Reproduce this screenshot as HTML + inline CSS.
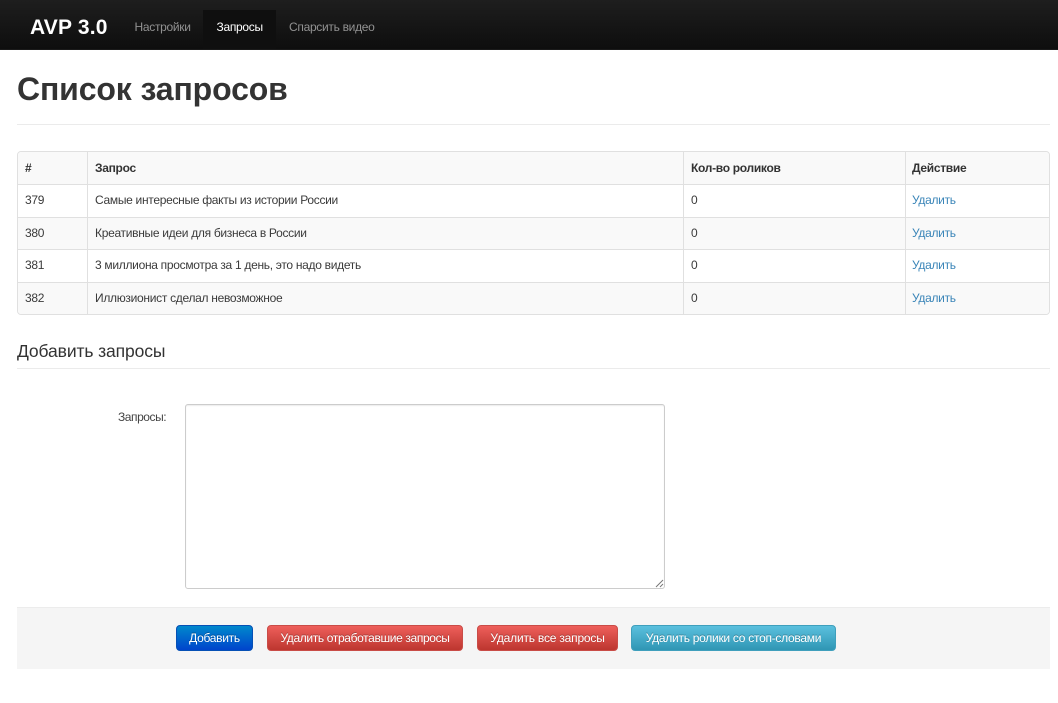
<!DOCTYPE html>
<html lang="ru">
<head>
<meta charset="utf-8">
<title>AVP 3.0</title>
<style>
html,body{margin:0;padding:0;background:#fff;}
body{width:1058px;height:703px;position:relative;overflow:hidden;font-family:"Liberation Sans",Arial,sans-serif;font-size:12px;color:#333;letter-spacing:-.3px;}
.a{position:absolute;white-space:nowrap;}
#nav{left:0;top:0;width:1058px;height:49px;background:linear-gradient(to bottom,#1e1e1e,#0e0e0e);border-bottom:1px solid #1a1a1a;}
#active{left:203px;top:10px;width:73px;height:39px;background:#0f0f0f;}
.nl{top:20px;line-height:14px;font-size:12px;color:#929292;}
hr{position:absolute;margin:0;border:0;height:1px;background:#ebebeb;}
#t{position:absolute;left:17px;top:151px;width:1033px;height:164px;box-sizing:border-box;border:1px solid #e0e0e0;border-radius:4px;overflow:hidden;}
.row{position:absolute;left:0;width:1031px;box-sizing:border-box;border-top:1px solid #e0e0e0;}
.odd{background:#f9f9f9;}
.v{position:absolute;top:0;bottom:0;width:1px;background:#e0e0e0;}
.c{position:absolute;white-space:nowrap;line-height:14px;color:#3a3a3a;}
.b{font-weight:bold;color:#333;}
.l{color:#3a85b8;}
#ta{left:185px;top:404px;width:480px;height:185px;box-sizing:border-box;border:1px solid #ccc;border-radius:3px;box-shadow:inset 0 1px 1px rgba(0,0,0,.08);}
#bar{left:17px;top:607px;width:1033px;height:62px;background:#f5f5f5;border-top:1px solid #ececec;box-sizing:border-box;}
.btn{position:absolute;top:625px;height:26px;box-sizing:border-box;border-radius:4px;color:#fff;line-height:25px;text-align:center;font-size:12px;text-shadow:0 -1px 0 rgba(0,0,0,.25);white-space:nowrap;}
.blue{background:linear-gradient(to bottom,#0088cc,#0044cc);border:1px solid #0650b5;}
.red{background:linear-gradient(to bottom,#ee5f5b,#bd362f);border:1px solid #c94c47;}
.info{background:linear-gradient(to bottom,#5bc0de,#2f96b4);border:1px solid #3f9fbc;}
</style>
</head>
<body>
<div class="a" id="nav"></div>
<div class="a" id="active"></div>
<div class="a" style="left:30px;top:15px;font-size:21px;line-height:26px;font-weight:bold;color:#fff;letter-spacing:.2px;">AVP 3.0</div>
<div class="a nl" style="left:134.5px;">Настройки</div>
<div class="a nl" style="left:216.5px;color:#fff;">Запросы</div>
<div class="a nl" style="left:289px;">Спарсить видео</div>

<div class="a" style="left:17px;top:68px;font-size:32px;line-height:42px;font-weight:bold;color:#333;letter-spacing:-.13px;">Список запросов</div>
<hr style="left:17px;top:124px;width:1033px;">

<div id="t">
  <div class="row" style="top:0;height:32px;border-top:0;background:#f9f9f9;">
    <div class="c b" style="left:7px;top:9px;">#</div>
    <div class="c b" style="left:77px;top:9px;">Запрос</div>
    <div class="c b" style="left:673px;top:9px;">Кол-во роликов</div>
    <div class="c b" style="left:894px;top:9px;">Действие</div>
  </div>
  <div class="row" style="top:32px;height:33px;">
    <div class="c" style="left:7px;top:8px;">379</div>
    <div class="c" style="left:77px;top:8px;">Самые интересные факты из истории России</div>
    <div class="c" style="left:673px;top:8px;">0</div>
    <div class="c l" style="left:894px;top:8px;">Удалить</div>
  </div>
  <div class="row odd" style="top:65px;height:32px;">
    <div class="c" style="left:7px;top:8px;">380</div>
    <div class="c" style="left:77px;top:8px;">Креативные идеи для бизнеса в России</div>
    <div class="c" style="left:673px;top:8px;">0</div>
    <div class="c l" style="left:894px;top:8px;">Удалить</div>
  </div>
  <div class="row" style="top:97px;height:33px;">
    <div class="c" style="left:7px;top:8px;">381</div>
    <div class="c" style="left:77px;top:8px;">3 миллиона просмотра за 1 день, это надо видеть</div>
    <div class="c" style="left:673px;top:8px;">0</div>
    <div class="c l" style="left:894px;top:8px;">Удалить</div>
  </div>
  <div class="row odd" style="top:130px;height:33px;">
    <div class="c" style="left:7px;top:8px;">382</div>
    <div class="c" style="left:77px;top:8px;">Иллюзионист сделал невозможное</div>
    <div class="c" style="left:673px;top:8px;">0</div>
    <div class="c l" style="left:894px;top:8px;">Удалить</div>
  </div>
  <div class="v" style="left:69px;"></div>
  <div class="v" style="left:665px;"></div>
  <div class="v" style="left:887px;"></div>
</div>

<div class="a" style="left:17px;top:339px;font-size:17.5px;line-height:24px;color:#333;letter-spacing:-.12px;">Добавить запросы</div>
<hr style="left:17px;top:368px;width:1033px;">

<div class="a" style="left:118px;top:410px;line-height:14px;color:#444;letter-spacing:-.45px;">Запросы:</div>
<div class="a" id="ta">
  <svg style="position:absolute;right:0;bottom:0;" width="9" height="9" viewBox="0 0 9 9"><path d="M1 8L8 1M5 8L8 5" stroke="#777" stroke-width="1" fill="none"/></svg>
</div>

<div class="a" id="bar"></div>
<div class="btn blue" style="left:176px;width:77px;">Добавить</div>
<div class="btn red" style="left:267px;width:196px;letter-spacing:-.36px;">Удалить отработавшие запросы</div>
<div class="btn red" style="left:477px;width:141px;letter-spacing:-.2px;">Удалить все запросы</div>
<div class="btn info" style="left:631px;width:205px;letter-spacing:-.27px;">Удалить ролики со стоп-словами</div>
</body>
</html>
